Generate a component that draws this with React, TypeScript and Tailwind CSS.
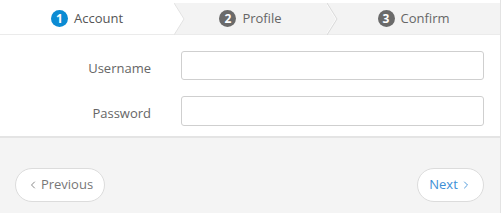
import { ChevronLeft, ChevronRight } from 'lucide-react';

type Step = { n: number; label: string; active?: boolean; width: string; z: string };

const steps: Step[] = [
  { n: 1, label: 'Account', active: true, width: 'w-[174px]', z: 'z-20' },
  { n: 2, label: 'Profile', width: 'w-[153px]', z: 'z-10' },
  { n: 3, label: 'Confirm', width: 'flex-1', z: 'z-0' },
];

function StepTab({ step, last }: { step: Step; last: boolean }) {
  return (
    <li
      className={`relative flex h-full items-center justify-center gap-[6px] ${step.width} ${step.z} ${
        step.active ? 'bg-white text-[#555]' : 'bg-[#f3f3f3] text-[#666]'
      }`}
    >
      <span
        className={`flex h-[17px] w-[17px] items-center justify-center rounded-full text-[12px] font-bold leading-none text-white ${
          step.active ? 'bg-[#0b8bd3]' : 'bg-[#6a6a6a]'
        }`}
      >
        {step.n}
      </span>
      <span className="text-[13px]">{step.label}</span>
      {/* chevron at the right edge of the tab */}
      {!last && (
        <svg
          className="absolute top-0 left-full h-[32px] w-[12px]"
          viewBox="0 0 12 32"
          fill="none"
        >
          {step.active ? (
            <>
              <polygon points="0,0 10,16 0,32" fill="#fff" />
              <polyline points="0,0 10,16 0,32" stroke="#e2e2e2" strokeWidth="1" />
            </>
          ) : (
            <>
              <polyline points="-1,0 9,16 -1,32" stroke="#fbfbfb" strokeWidth="1" />
              <polyline points="0,0 10,16 0,32" stroke="#dadada" strokeWidth="1" />
            </>
          )}
        </svg>
      )}
    </li>
  );
}

export default function App() {
  return (
    <div className="h-[213px] w-[502px] bg-white font-['Open_Sans',sans-serif]">
      <div className="flex h-full w-[501px] flex-col border-r border-[#e3e3e3]">
        {/* Steps */}
        <div className="pt-[3px]">
          <ul className="flex h-[32px] border-b border-[#ebebeb]">
            {steps.map((s, i) => (
              <StepTab key={s.n} step={s} last={i === steps.length - 1} />
            ))}
          </ul>
        </div>

        {/* Form */}
        <div className="flex flex-col gap-[16px] border-b-2 border-[#e4e4e4] pt-[16px] pb-[10px]">
          <div className="flex items-center">
            <label className="w-[151px] pt-[6px] text-right text-[13px] text-[#666]">Username</label>
            <input
              type="text"
              className="ml-[30px] h-[29px] w-[303px] rounded-[3px] border border-[#cfcfcf] bg-white"
            />
          </div>
          <div className="flex items-center">
            <label className="w-[151px] pt-[5px] text-right text-[13px] text-[#666]">Password</label>
            <input
              type="password"
              className="ml-[30px] h-[30px] w-[303px] rounded-[3px] border border-[#cfcfcf] bg-white"
            />
          </div>
        </div>

        {/* Footer */}
        <div className="flex flex-1 items-start justify-between bg-[#f4f4f4] pt-[30px] pr-[16px] pl-[15px]">
          <button className="flex h-[34px] w-[90px] items-center justify-center gap-[2px] rounded-full border border-[#dcdcdc] bg-white text-[13px] text-[#777]">
            <ChevronLeft className="h-3 w-3" strokeWidth={1.75} />
            Previous
          </button>
          <button className="flex h-[34px] w-[67px] items-center justify-center gap-[2px] rounded-full border border-[#dcdcdc] bg-white text-[13px] text-[#3d8fd6]">
            Next
            <ChevronRight className="h-3 w-3" strokeWidth={1.75} />
          </button>
        </div>
      </div>
    </div>
  );
}
